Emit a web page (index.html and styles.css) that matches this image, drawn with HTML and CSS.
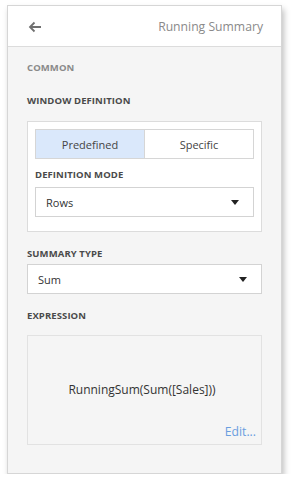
FILE: index.html
```html
<!DOCTYPE html>
<html lang="en">
<head>
  <meta charset="UTF-8">
  <meta name="viewport" content="width=device-width, initial-scale=1.0">
  <title>Running Summary</title>
  <link rel="stylesheet" href="styles.css">
</head>
<body>
  <div class="panel">
    <div class="header">
      <span class="back">
        <svg width="14" height="12" viewBox="0 0 14 12"><path d="M13 6H2M6.5 1.5L2 6l4.5 4.5" fill="none" stroke="#707070" stroke-width="1.8"/></svg>
      </span>
      <span class="title">Running Summary</span>
    </div>

    <div class="body">
      <div class="section-title muted">COMMON</div>

      <div class="label">WINDOW DEFINITION</div>
      <div class="group">
        <div class="toggle">
          <div class="toggle-btn active">Predefined</div>
          <div class="toggle-btn">Specific</div>
        </div>
        <div class="label inner">DEFINITION MODE</div>
        <div class="select">
          <span>Rows</span>
          <span class="caret"></span>
        </div>
      </div>

      <div class="label">SUMMARY TYPE</div>
      <div class="select">
        <span>Sum</span>
        <span class="caret"></span>
      </div>

      <div class="label">EXPRESSION</div>
      <div class="expression">
        <div class="expr-text">RunningSum(Sum([Sales]))</div>
        <div class="edit">Edit...</div>
      </div>
    </div>
  </div>
</body>
</html>
```

FILE: styles.css
```css
body {
  margin: 0;
  padding: 5px 0 0 7px;
  background: #fff;
  font-family: 'Open Sans', 'Noto Sans', sans-serif;
  color: #333;
}
.panel {
  width: 275px;
  height: 469px;
  border: 1px solid #d6d6d6;
  background: #f5f5f5;
  box-shadow: 2px 4px 6px rgba(0,0,0,0.25);
  box-sizing: border-box;
}
.header {
  height: 40px;
  background: #fff;
  border-bottom: 1px solid #dcdcdc;
  display: flex;
  align-items: center;
  justify-content: space-between;
  padding: 0 18px 0 20px;
}
.back {
  display: flex;
  margin-top: 2px;
}
.title {
  font-size: 12.2px;
  color: #8a8a8a;
  margin-top: 1px;
}
.body {
  padding: 14px 19px 0 19px;
}
.section-title, .label {
  font-size: 9.5px;
  font-weight: 700;
  letter-spacing: 0.1px;
  color: #4a4a4a;
}
.muted {
  color: #8a8a8a;
  margin-bottom: 20px;
}
.label {
  margin-bottom: 4px;
}
.group {
  border: 1px solid #dcdcdc;
  background: #fff;
  padding: 7px 7px 14px 7px;
  margin-top: 14px;
  margin-bottom: 15px;
}
.toggle {
  display: flex;
  border: 1px solid #d6d6d6;
  height: 30px;
  box-sizing: border-box;
  margin-bottom: 9px;
}
.toggle-btn {
  flex: 1;
  display: flex;
  align-items: center;
  justify-content: center;
  font-size: 11px;
  color: #444;
}
.toggle-btn.active {
  background: #dae8fb;
  border-right: 1px solid #d6d6d6;
}
.label.inner {
  margin-bottom: 6px;
}
.select {
  height: 30px;
  box-sizing: border-box;
  border: 1px solid #d3d3d3;
  background: #fff;
  display: flex;
  align-items: center;
  justify-content: space-between;
  padding: 0 14px 0 10px;
  font-size: 11px;
  color: #333;
  margin-bottom: 15px;
}
.group .select {
  margin-bottom: 0;
}
.caret {
  width: 0;
  height: 0;
  border-left: 4.5px solid transparent;
  border-right: 4.5px solid transparent;
  border-top: 5px solid #222;
}
.expression {
  height: 110px;
  box-sizing: border-box;
  border: 1px solid #e2e2e2;
  margin-top: 13px;
  display: flex;
  flex-direction: column;
  align-items: center;
  padding: 0 5px 0 0;
}
.expr-text {
  font-size: 12px;
  color: #333;
  margin-top: 45px;
}
.edit {
  align-self: flex-end;
  margin-top: 25px;
  font-size: 12.2px;
  color: #6a9ee0;
}
```
